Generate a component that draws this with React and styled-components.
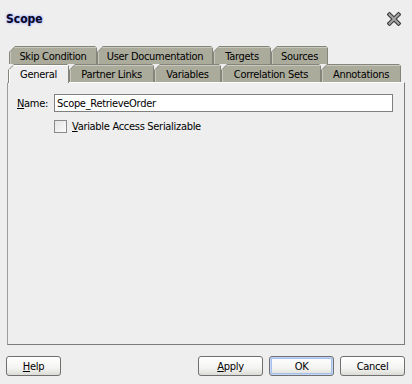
import styled, { createGlobalStyle } from "styled-components";

const GlobalStyle = createGlobalStyle`
  * { box-sizing: border-box; margin: 0; padding: 0; }
  body {
    background: #eeeeee;
    font-family: "DejaVu Sans Condensed", "Liberation Sans", Arial, sans-serif;
    font-size: 11px;
    letter-spacing: -0.3px;
    color: #000;
  }
`;

const Dialog = styled.div`
  width: 412px;
  height: 384px;
  background: #eeeeee;
  display: flex;
  flex-direction: column;
`;

const Header = styled.div`
  height: 37px;
  padding: 0 11px 0 6px;
  display: flex;
  align-items: center;
  justify-content: space-between;
`;

const Title = styled.h1`
  font-size: 12px;
  font-weight: bold;
  letter-spacing: 0;
  color: #06061e;
  text-shadow: 0 0 2px #8c9cff, 0 0 3px #b4bfff;
`;

const CloseButton = styled.div`
  width: 14px;
  height: 14px;
  display: flex;
`;

const Tabs = styled.div`
  padding-top: 9px;
  display: flex;
  flex-direction: column;
`;

const TabRow = styled.div`
  display: flex;
  height: 18px;
  padding-left: ${p => p.$indent}px;
  align-items: flex-start;
`;

const Tab = styled.div`
  position: relative;
  z-index: ${p => (p.$active ? 2 : 1)};
  width: ${p => p.$w}px;
  height: ${p => (p.$active ? 19 : 18)}px;
  padding: 1px 1px 0 1px;
  background: #85857c;
  clip-path: polygon(0 6px, 6px 0, calc(100% - 2px) 0, 100% 2px, 100% 100%, 0 100%);
`;

const TabFace = styled.div`
  height: 100%;
  display: flex;
  align-items: center;
  justify-content: center;
  padding-top: 1px;
  background: ${p => (p.$active ? "#eeeeee" : "#abab9c")};
  box-shadow: inset 1px 1px 0 ${p => (p.$active ? "#ffffff" : "#c8c8bc")};
  clip-path: polygon(0 5px, 5px 0, 100% 0, 100% 100%, 0 100%);
  white-space: nowrap;
`;

const Panel = styled.div`
  position: relative;
  z-index: 0;
  margin: 0 7px 0 7px;
  height: 263px;
  border-top: 1px solid #ffffff;
  border-left: 1px solid #9c9c9c;
  border-right: 1px solid #7c7c7c;
  border-bottom: 1px solid #7c7c7c;
  padding: 11px 11px 0 9px;
  display: flex;
  flex-direction: column;
  gap: 8px;
`;

const FieldRow = styled.div`
  display: flex;
  align-items: center;
  height: 18px;
`;

const Label = styled.label`
  width: 37px;
`;

const Mnemonic = styled.span`
  text-decoration: underline;
`;

const TextInput = styled.div`
  flex: 1;
  height: 18px;
  border: 1px solid #808080;
  background: #ffffff;
  padding: 0 2px;
  display: flex;
  align-items: center;
`;

const CheckRow = styled.div`
  display: flex;
  align-items: center;
  gap: 5px;
  padding-left: 37px;
  height: 13px;
`;

const CheckBox = styled.div`
  width: 13px;
  height: 13px;
  border: 1px solid #8a8a8a;
  background: linear-gradient(135deg, #e4e4e4, #fafafa);
`;

const CheckLabel = styled.span``;

const Footer = styled.div`
  display: flex;
  align-items: flex-start;
  padding: 11px 7px 0 6px;
  gap: 6px;
`;

const Spacer = styled.div`
  flex: 1;
`;

const Button = styled.button`
  width: ${p => p.$w}px;
  height: 20px;
  font-family: inherit;
  font-size: 11px;
  letter-spacing: inherit;
  color: #000;
  border: 1px solid #707070;
  border-radius: 3px;
  background: linear-gradient(#ffffff, #f4f4f2 60%, #dcdcd6);
  box-shadow: ${p => (p.$default ? "inset 0 0 0 1px #c4d6f6, inset 0 0 0 2px #a6c0ee" : "none")};
  display: flex;
  align-items: center;
  justify-content: center;
`;

const rowOne = [
  ["Skip Condition", 88],
  ["User Documentation", 116],
  ["Targets", 58],
  ["Sources", 57],
];

const rowTwo = [
  ["General", 61, true],
  ["Partner Links", 85],
  ["Variables", 67],
  ["Correlation Sets", 100],
  ["Annotations", 80],
];

function App() {
  return (
    <>
      <GlobalStyle />
      <Dialog>
        <Header>
          <Title>Scope</Title>
          <CloseButton>
            <svg width="14" height="14" viewBox="0 0 14 14">
              <path d="M2.5 2.5 L11.5 11.5 M11.5 2.5 L2.5 11.5" stroke="#3c3c3c" strokeWidth="4.2" strokeLinecap="square" />
              <path d="M2.5 2.5 L11.5 11.5 M11.5 2.5 L2.5 11.5" stroke="#a4a4a4" strokeWidth="2" strokeLinecap="square" />
            </svg>
          </CloseButton>
        </Header>
        <Tabs>
          <TabRow $indent={9}>
            {rowOne.map(([name, w]) => (
              <Tab key={name} $w={w}>
                <TabFace>{name}</TabFace>
              </Tab>
            ))}
          </TabRow>
          <TabRow $indent={8}>
            {rowTwo.map(([name, w, active]) => (
              <Tab key={name} $w={w} $active={active}>
                <TabFace $active={active}>{name}</TabFace>
              </Tab>
            ))}
          </TabRow>
        </Tabs>
        <Panel>
          <FieldRow>
            <Label><Mnemonic>N</Mnemonic>ame:</Label>
            <TextInput>Scope_RetrieveOrder</TextInput>
          </FieldRow>
          <CheckRow>
            <CheckBox />
            <CheckLabel><Mnemonic>V</Mnemonic>ariable Access Serializable</CheckLabel>
          </CheckRow>
        </Panel>
        <Footer>
          <Button $w={55}><Mnemonic>H</Mnemonic>elp</Button>
          <Spacer />
          <Button $w={65}><Mnemonic>A</Mnemonic>pply</Button>
          <Button $w={65} $default>OK</Button>
          <Button $w={65}>Cancel</Button>
        </Footer>
      </Dialog>
    </>
  );
}

export default App;
